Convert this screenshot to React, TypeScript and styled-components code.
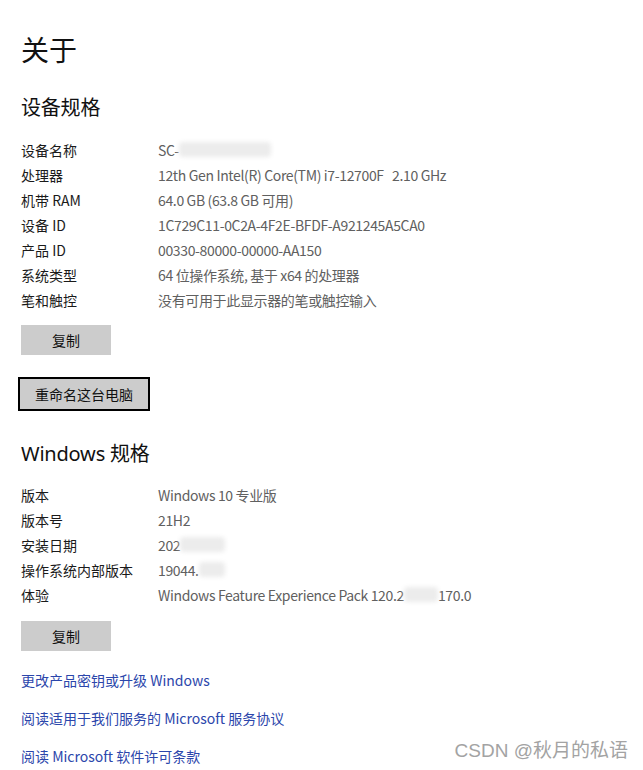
import React from 'react';
import styled, { createGlobalStyle } from 'styled-components';

const GlobalStyle = createGlobalStyle`
  html, body {
    margin: 0;
    padding: 0;
    background: #fff;
  }
  body {
    font-family: "Noto Sans CJK SC", sans-serif;
  }
`;

const Page = styled.div`
  position: relative;
  width: 643px;
  height: 770px;
  padding: 29px 0 0 21px;
  box-sizing: border-box;
  overflow: hidden;
`;

const Title = styled.h1`
  margin: 0;
  font-size: 28px;
  line-height: 40px;
  font-weight: 400;
  color: #111;
`;

const SectionTitle = styled.h2<{ $gap: number }>`
  margin: ${p => p.$gap}px 0 0;
  font-family: "Noto Sans", "Noto Sans CJK SC", sans-serif;
  font-size: 20px;
  line-height: 28px;
  font-weight: 400;
  letter-spacing: -0.2px;
  color: #111;
`;

const SpecList = styled.dl<{ $gap: number }>`
  margin: ${p => p.$gap}px 0 0;
  display: grid;
  grid-template-columns: 137px 1fr;
  grid-auto-rows: 25px;
  align-items: center;
  font-size: 14px;
`;

const Label = styled.dt`
  margin: 0;
  color: #1a1a1a;
`;

const Value = styled.dd`
  margin: 0;
  color: #606060;
  letter-spacing: -0.35px;
  white-space: pre;
  display: flex;
  align-items: center;
`;

// blurred-out part of a value, as in the screenshot
const Blur = styled.span<{ $w: number }>`
  display: inline-block;
  width: ${p => p.$w}px;
  height: 15px;
  background: #ececec;
  border-radius: 4px;
  filter: blur(2px);
`;

const Button = styled.button<{ $focused?: boolean; $gap: number }>`
  display: block;
  margin: ${p => p.$gap}px 0 0 ${p => (p.$focused ? -3 : 0)}px;
  height: ${p => (p.$focused ? 34 : 30)}px;
  padding: 0;
  width: ${p => (p.$focused ? '132px' : '90px')};
  background: #cccccc;
  border: ${p => (p.$focused ? '2px solid #000' : 'none')};
  font-family: inherit;
  font-size: 14px;
  color: #111;
  cursor: pointer;
`;

const Links = styled.div`
  margin-top: 19px;
  display: flex;
  flex-direction: column;
  gap: 18px;
`;

const Link = styled.a`
  font-size: 14px;
  line-height: 20px;
  color: #2b46ab;
  text-decoration: none;
`;

const Watermark = styled.div`
  position: absolute;
  right: 15px;
  bottom: 8px;
  font-family: "Liberation Sans", "Noto Sans CJK SC", sans-serif;
  font-size: 19px;
  color: #a3a3a3;
`;

const deviceSpecs: [string, React.ReactNode][] = [
  ['设备名称', <>SC-<Blur $w={92} /></>],
  ['处理器', '12th Gen Intel(R) Core(TM) i7-12700F   2.10 GHz'],
  ['机带 RAM', '64.0 GB (63.8 GB 可用)'],
  ['设备 ID', '1C729C11-0C2A-4F2E-BFDF-A921245A5CA0'],
  ['产品 ID', '00330-80000-00000-AA150'],
  ['系统类型', '64 位操作系统, 基于 x64 的处理器'],
  ['笔和触控', '没有可用于此显示器的笔或触控输入'],
];

const windowsSpecs: [string, React.ReactNode][] = [
  ['版本', 'Windows 10 专业版'],
  ['版本号', '21H2'],
  ['安装日期', <>202<Blur $w={45} /></>],
  ['操作系统内部版本', <>19044.<Blur $w={26} /></>],
  ['体验', <>Windows Feature Experience Pack 120.2<Blur $w={34} />170.0</>],
];

const Specs: React.FC<{ rows: [string, React.ReactNode][]; gap: number }> = ({ rows, gap }) => (
  <SpecList $gap={gap}>
    {rows.map(([k, v]) => (
      <React.Fragment key={k}>
        <Label>{k}</Label>
        <Value>{v}</Value>
      </React.Fragment>
    ))}
  </SpecList>
);

const App: React.FC = () => (
  <Page>
    <GlobalStyle />
    <Title>关于</Title>

    <SectionTitle $gap={25}>设备规格</SectionTitle>
    <Specs rows={deviceSpecs} gap={15} />
    <Button $gap={13}>复制</Button>
    <Button $gap={22} $focused>重命名这台电脑</Button>

    <SectionTitle $gap={29}>Windows 规格</SectionTitle>
    <Specs rows={windowsSpecs} gap={14} />
    <Button $gap={14}>复制</Button>

    <Links>
      <Link href="#">更改产品密钥或升级 Windows</Link>
      <Link href="#">阅读适用于我们服务的 Microsoft 服务协议</Link>
      <Link href="#">阅读 Microsoft 软件许可条款</Link>
    </Links>

    <Watermark>CSDN @秋月的私语</Watermark>
  </Page>
);

export default App;
